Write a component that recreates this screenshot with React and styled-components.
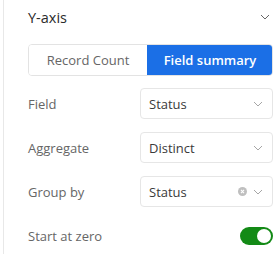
import styled, { createGlobalStyle } from 'styled-components';

const GlobalStyle = createGlobalStyle`
	html, body {
		margin: 0;
		padding: 0;
		background: #fff;
	}
	body {
		font-family: 'Open Sans', 'Noto Sans', sans-serif;
	}
`;

const Panel = styled.section`
	width: 276px;
	height: 254px;
	margin-left: 3px;
	border-left: 1px solid #e8e8e8;
	padding: 0 6px 0 24px;
	box-sizing: border-box;
	display: flex;
	flex-direction: column;
`;

const Header = styled.div`
	height: 34px;
	display: flex;
	align-items: center;
	justify-content: space-between;
`;

const Title = styled.h3`
	margin: 0;
	font-size: 14.5px;
	font-weight: 400;
	color: #2b2b2b;
`;

const Chevron = styled.svg`
	width: 10px;
	height: 6px;
	margin-right: ${(p) => p.$right || 0}px;
	flex-shrink: 0;
`;

const Segmented = styled.div`
	margin-top: 10px;
	height: 32px;
	display: flex;
	border: 1px solid #e3e3e3;
	border-radius: 4px;
	box-sizing: border-box;
	overflow: hidden;
`;

const Segment = styled.button`
	flex: ${(p) => p.$grow};
	border: none;
	margin: ${(p) => (p.$active ? '-1px -1px -1px 0' : 0)};
	border-radius: ${(p) => (p.$active ? '0 4px 4px 0' : 0)};
	background: ${(p) => (p.$active ? '#1b6fe6' : '#fff')};
	color: ${(p) => (p.$active ? '#fff' : '#666')};
	font-family: inherit;
	font-size: 13px;
	font-weight: ${(p) => (p.$active ? 600 : 400)};
	padding: 0;
	cursor: pointer;
`;

const Rows = styled.div`
	margin-top: 12px;
	display: flex;
	flex-direction: column;
	gap: 13px;
`;

const Row = styled.div`
	display: grid;
	grid-template-columns: 112px 1fr;
	align-items: center;
	height: 31px;
`;

const Label = styled.span`
	font-size: 13px;
	color: #666;
`;

const Select = styled.div`
	height: 31px;
	border: 1px solid #e6e6e6;
	border-radius: 4px;
	box-sizing: border-box;
	display: flex;
	align-items: center;
	padding: 0 9px 0 8px;
	gap: 6px;
	font-size: 13px;
	color: #3a3a3a;
`;

const Value = styled.span`
	flex: 1;
`;

const ClearIcon = styled.svg`
	width: 9px;
	height: 9px;
`;

const ToggleCell = styled.div`
	display: flex;
	justify-content: flex-end;
`;

const Toggle = styled.div`
	width: 33px;
	height: 18px;
	border-radius: 9px;
	background: #138a16;
	display: flex;
	align-items: center;
	justify-content: flex-end;
	padding: 0 2px;
	box-sizing: border-box;
`;

const Knob = styled.span`
	width: 14px;
	height: 14px;
	border-radius: 50%;
	background: #fff;
`;

function Down({ color = '#8c8c8c', right }) {
	return (
		<Chevron viewBox="0 0 10 6" $right={right}>
			<path d="M1 1l4 4 4-4" fill="none" stroke={color} strokeWidth="1" />
		</Chevron>
	);
}

function Dropdown({ value, clearable }) {
	return (
		<Select>
			<Value>{value}</Value>
			{clearable && (
				<ClearIcon viewBox="0 0 10 10">
					<circle cx="5" cy="5" r="5" fill="#bfbfbf" />
					<path d="M3.3 3.3l3.4 3.4M6.7 3.3L3.3 6.7" stroke="#fff" strokeWidth="1.2" />
				</ClearIcon>
			)}
			<Down color="#a6a6a6" />
		</Select>
	);
}

export default function App() {
	return (
		<>
			<GlobalStyle />
			<Panel>
				<Header>
					<Title>Y-axis</Title>
					<Down color="#666" right={3} />
				</Header>
				<Segmented>
					<Segment $grow="119">Record Count</Segment>
					<Segment $grow="127" $active>Field summary</Segment>
				</Segmented>
				<Rows>
					<Row>
						<Label>Field</Label>
						<Dropdown value="Status" />
					</Row>
					<Row>
						<Label>Aggregate</Label>
						<Dropdown value="Distinct" />
					</Row>
					<Row>
						<Label>Group by</Label>
						<Dropdown value="Status" clearable />
					</Row>
					<Row>
						<Label>Start at zero</Label>
						<ToggleCell>
							<Toggle>
								<Knob />
							</Toggle>
						</ToggleCell>
					</Row>
				</Rows>
			</Panel>
		</>
	);
}
